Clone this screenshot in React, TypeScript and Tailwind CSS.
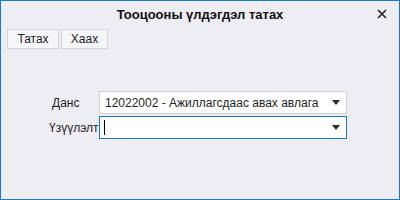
export default function App() {
  return (
    <div
      className="w-[400px] h-[200px] border border-[#1b79cc] bg-[#eeedf2] flex flex-col text-[12px] text-[#1e1e1e]"
      style={{ fontFamily: '"Liberation Sans", Arial, sans-serif' }}
    >
      {/* Title bar */}
      <div className="h-[28px] flex items-center relative">
        <div className="flex-1 text-center font-bold text-[13px] text-[#111]">
          Тооцооны үлдэгдэл татах
        </div>
        <button className="absolute right-[12px] top-[8px] w-[10px] h-[10px] flex items-center justify-center">
          <svg width="10" height="10" viewBox="0 0 10 10">
            <path d="M1 1 L9 9 M9 1 L1 9" stroke="#2a2a2a" strokeWidth="1.7" />
          </svg>
        </button>
      </div>

      {/* Toolbar */}
      <div className="flex gap-[2px] pl-[6px]">
        <button className="h-[20px] w-[52px] border border-[#d3d3dc] bg-[#f6f6f9] leading-none">
          Татах
        </button>
        <button className="h-[20px] w-[47px] border border-[#d3d3dc] bg-[#f6f6f9] leading-none">
          Хаах
        </button>
      </div>

      {/* Form */}
      <div className="mt-[42px] pl-[47px] grid grid-cols-[51px_248px] gap-y-[2px] items-center">
        <span className="pl-[4px]">Данс</span>
        <div className="h-[23px] border border-[#d0d0d8] bg-white flex items-center pl-[5px] pr-[6px]">
          <span className="flex-1 whitespace-nowrap">12022002 - Ажиллагсдаас авах авлага</span>
          <svg width="8" height="5" viewBox="0 0 8 5">
            <path d="M0 0 L8 0 L4 5 Z" fill="#2a2a2a" />
          </svg>
        </div>
        <span className="whitespace-nowrap pl-[1px]">Үзүүлэлт</span>
        <div className="h-[23px] border border-[#1b79cc] bg-white flex items-center pl-[4px] pr-[6px]">
          <span className="flex-1 flex items-center">
            <span className="w-[1px] h-[15px] bg-black" />
          </span>
          <svg width="8" height="5" viewBox="0 0 8 5">
            <path d="M0 0 L8 0 L4 5 Z" fill="#2a2a2a" />
          </svg>
        </div>
      </div>
    </div>
  );
}
